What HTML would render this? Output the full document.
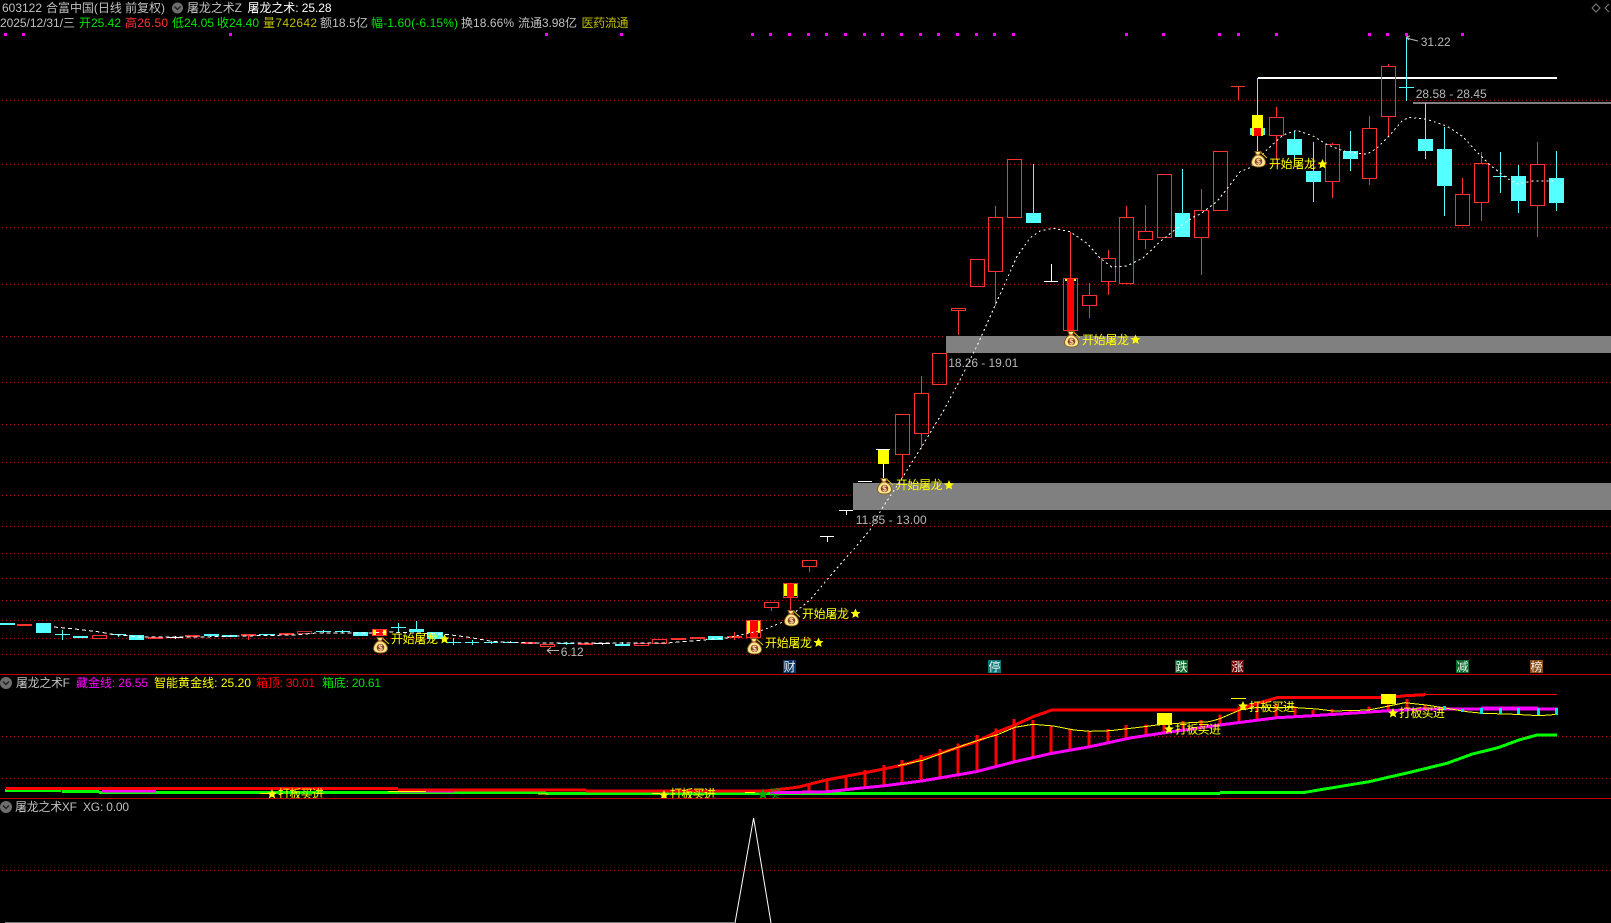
<!DOCTYPE html>
<html><head><meta charset="utf-8"><style>
html,body{margin:0;padding:0;background:#000;width:1611px;height:923px;overflow:hidden}
svg{display:block;position:absolute;left:0;top:0}
text{font-family:"Liberation Sans","WenQuanYi Zen Hei","Noto Sans CJK SC",sans-serif;font-size:12px;white-space:pre}
</style></head><body>
<svg width="1611" height="923" viewBox="0 0 1611 923" xmlns="http://www.w3.org/2000/svg">
<defs>
<g id="bag">
<path d="M9.7 1.3L16 7" stroke="#e8c800" fill="none"/>
<path d="M4 .5h6l-1.500 3.500c4 1.500 6 5 6 7.500 0 3-3 4.500-7 4.500s-7-1.500-7-4.500C.5 9 2.500 5.500 5.500 4z" fill="#ffe98a" stroke="#8a5a18" stroke-width="1"/>
<path d="M5 4h4" stroke="#a03020" stroke-width="1"/>
<circle cx="7.500" cy="10.500" r="3.800" fill="#8a3c2c"/>
<text x="7.500" y="13.500" text-anchor="middle" style="font-size:8px;font-weight:bold" fill="#ffe8a8">$</text>
</g>
<polygon id="star" points="0,-5 1.500,-1.600 5,-1.400 2.300,.9 3.100,4.500 0,2.600 -3.100,4.500 -2.300,.9 -5,-1.400 -1.500,-1.600" fill="#ffff00"/>
<clipPath id="p1"><rect x="0" y="675" width="1611" height="123"/></clipPath>
</defs>

<!-- grid -->
<g stroke="#a80000" stroke-width="1" stroke-dasharray="1 3" fill="none" shape-rendering="crispEdges">
<path d="M2 100.500H1611M2 164.500H1611M2 227.500H1611M2 284.500H1611M2 336.500H1611M2 382.500H1611M2 424.500H1611M2 462.500H1611M2 495.500H1611M2 526.500H1611M2 553.500H1611M2 578.500H1611M2 600.500H1611M2 620.500H1611M2 638.500H1611M2 654.500H1611M2 736.500H1611M2 778.500H1611M2 870.500H1611"/>
</g>

<!-- gray bands -->
<g fill="#808080" shape-rendering="crispEdges">
<rect x="946" y="336" width="665" height="17"/>
<rect x="853" y="483" width="758" height="27"/>
<rect x="1413" y="102" width="198" height="2"/>
</g>
<rect x="1258" y="77" width="299" height="2" fill="#fff" shape-rendering="crispEdges"/>

<!-- magenta markers -->
<path fill="#ff00ff" shape-rendering="crispEdges" d="M4 33h3v3h-3zM22 33h3v3h-3zM229 33h3v3h-3zM545 33h3v3h-3zM620 33h3v3h-3zM751 33h3v3h-3zM769 33h3v3h-3zM788 33h3v3h-3zM807 33h3v3h-3zM825 33h3v3h-3zM844 33h3v3h-3zM863 33h3v3h-3zM881 33h3v3h-3zM900 33h3v3h-3zM919 33h3v3h-3zM937 33h3v3h-3zM956 33h3v3h-3zM975 33h3v3h-3zM993 33h3v3h-3zM1012 33h3v3h-3zM1125 33h3v3h-3zM1162 33h3v3h-3zM1218 33h3v3h-3zM1237 33h3v3h-3zM1275 33h3v3h-3zM1368 33h3v3h-3zM1386 33h3v3h-3zM1405 33h3v3h-3zM1461 33h3v3h-3z"/>

<g shape-rendering="crispEdges">
<!-- cyan wicks -->
<path fill="none" stroke="#54ffff" d="
M1556.500 151V178M1556.500 203V211
M1518.500 165V176M1518.500 201V213
M1493 176.500H1507M1500.500 152V193
M1444.500 127V149M1444.500 186V216
M1425.500 103V139M1425.500 151V159
M1399 87.500H1414M1406.500 37V101
M1350.500 131V151M1350.500 159V171
M1313.500 142V171M1313.500 182V202
M1294.500 131V139M1294.500 155V160
M1257.500 78V115M1257.500 136V151
M1182.500 169V213
M1033.500 164V213
M630 644.500H615M622.500 642V646
M558 643.500H574M566.500 642V645
M503 642.500H518M510.500 641V643
M484 642.500H498M491.500 641V644
M465 642.500H479M472.500 640V645
M446 642.500H461M453.500 638V645
M416.500 621V629
M391 627.500H406M398.500 623V632
M335 631.500H350M342.500 630V633
M316 631.500H331M323.500 630V633
M259 634.500H275
M111 634.500H126M118.500 634V637
M55 634.500H70M62.500 630V640
"/>
<!-- special fill parts -->
<path fill="#54ffff" d="M1250 128h15v7h-15z"/>
<path fill="#ffff00" d="M1252 115h11v13h-11zM1252 128h2v8h-2zM1261 128h2v8h-2zM878 449h11v15h-11zM784 583h13v13h-13zM747 620h13v13h-13zM373 629h13v6h-13zM1065 278h11v3h-11z"/>
<path fill="#ff0000" d="M1254 128h7v8h-7zM1067 278h7v53h-7zM787 583h7v15h-7zM750 620h8v18h-8zM376 629h7v7h-7zM881 449h6v1h-6z"/>

<!-- red hollow candles -->
<path fill="none" stroke="#ff3232" stroke-width="1" d="
M1530.500 164.500h14v41h-14zM1537.500 142V164M1537.500 206V237
M1474.500 163.500h14v39h-14zM1481.500 152V163M1481.500 203V221
M1455.500 194.500h14v31h-14zM1462.500 178V194
M1381.500 66.500h14v50h-14zM1388.500 64V66M1388.500 117V136
M1362.500 128.500h14v50h-14zM1369.500 116V128M1369.500 179V185
M1325.500 144.500h14v37h-14zM1332.500 143V144M1332.500 182V198
M1269.500 117.500h14v18h-14zM1276.500 107V117M1276.500 136V160
M1231 86.500H1245M1238.500 87V100
M1213.500 151.500h14v59h-14z
M1194.500 210.500h14v27h-14zM1201.500 189V210M1201.500 238V275
M1157.500 174.500h14v63h-14z
M1138.500 231.500h14v8h-14zM1145.500 205V231M1145.500 240V249
M1119.500 217.500h14v66h-14zM1126.500 206V217
M1101.500 258.500h14v23h-14zM1108.500 250V258M1108.500 282V295
M1082.500 295.500h14v10h-14zM1089.500 283V295M1089.500 306V318
M1063.500 278.500h14v52h-14zM1070.500 232V278
M1007.500 159.500h14v58h-14z
M988.500 217.500h14v54h-14zM995.500 206V217M995.500 272V306
M970.500 259.500h14v27h-14z
M951.500 308.500h14v2h-14zM958.500 311V335
M932.500 353.500h14v31h-14z
M914.500 393.500h14v40h-14zM921.500 376V393M921.500 434V449
M895.500 414.500h14v40h-14zM902.500 455V478
M802.500 560.500h14v6h-14zM809.500 567V572
M783.500 583.500h14v14h-14zM790.500 598V610
M764.500 602.500h14v5h-14zM771.500 608V611
M746.500 620.500h14v17h-14z
M652.500 639.500h14v4h-14z
M634.500 643.500h14v2h-14z
M540.500 644.500h14v2h-14z
M372.500 629.500h14v6h-14z
M92.500 635.500h14v3h-14z
M734.500 632V640M248.500 634V640
"/>
<path fill="none" stroke="#c03030" d="M297.500 631.500h14v2h-14z"/>
<!-- red filled -->
<path fill="#ff3232" d="M727 636h15v2h-15zM690 637h15v2h-15zM671 638h15v2h-15zM578 643h15v2h-15zM521 642h15v2h-15zM279 633h15v2h-15zM241 634h15v2h-15zM185 635h15v2h-15zM148 637h15v2h-15zM17 624h15v2h-15z"/>

<!-- cyan filled -->
<path fill="#54ffff" d="M1549 178h15v25h-15zM1511 176h15v25h-15zM1437 149h15v37h-15zM1418 139h15v12h-15zM1343 151h15v8h-15zM1306 171h15v11h-15zM1287 139h15v16h-15zM1175 213h15v24h-15zM1026 213h15v10h-15zM708 636h15v4h-15zM615 644h15v2h-15zM427 632h16v7h-16zM409 629h15v3h-15zM353 632h15v4h-15zM222 635h15v2h-15zM204 634h15v2h-15zM129 635h15v5h-15zM73 636h15v2h-15zM36 623h15v10h-15zM0 623h15v2h-15z"/>

<!-- white T marks -->
<path fill="none" stroke="#fff" d="
M1044 281.500H1058M1051.500 264V281
M876 449.500H890M883.500 464V478
M858 481.500H872
M839 510.500H853M846.500 511V515
M820 536.500H834M827.500 537V542
M167 637.500H183M175.500 636V639
M594 643.500H610M602.500 643V645
"/>
</g>

<!-- MA dashed -->
<g shape-rendering="crispEdges">
<polyline fill="none" stroke="#fff" stroke-width="1" stroke-dasharray="4 3" points="54,627 75,629 100,632 110,634 140,637 173,637 200,637 240,636 293,635 317,633 367,633 390,632 443,634 467,637 490,641 500,642 533,643 600,643 667,643 727,638"/>
<polyline fill="none" stroke="#fff" stroke-width="1" stroke-dasharray="2 3" points="727,638 763,630 783,622 810,600 837,568 853,550 870,530 881.700,509 903,476.700 921.700,446.700 943,411.700 960,380 976.700,346.700 993,310 1008,276.700 1016.700,256.700 1030,238 1040,231 1053,228.300 1070,231.700 1086.700,243 1100,258 1111.700,267 1126.700,266 1143,258 1160,241.700 1176.700,228.300 1193,217.300 1200,214.300 1216.700,201.700 1230,185 1240,171.700 1250,167.700 1266.700,150 1283,135 1296.700,130.300 1313,136 1326.700,144.300 1343,151 1366.700,154.300 1376.700,148.300 1390,135 1403,120 1410,117.300 1426.700,119.300 1446.700,126 1463,136.700 1476.700,151.700 1490,165 1506.700,178.300 1518,184 1533,181 1555,181"/>
</g>

<!-- bags -->
<use href="#bag" x="373" y="637"/>
<use href="#bag" x="747" y="638"/>
<use href="#bag" x="784" y="610"/>
<use href="#bag" x="877" y="478"/>
<use href="#bag" x="1064" y="331"/>
<use href="#bag" x="1251" y="151"/>

<!-- buy labels -->
<g fill="#ffff00">
<text x="391" y="643" textLength="47">开始屠龙</text><use href="#star" x="444.500" y="639"/>
<text x="765" y="647" textLength="47">开始屠龙</text><use href="#star" x="818.500" y="642.500"/>
<text x="802" y="618" textLength="47">开始屠龙</text><use href="#star" x="855.500" y="613.500"/>
<text x="895.700" y="489" textLength="47">开始屠龙</text><use href="#star" x="949" y="485"/>
<text x="1082" y="344" textLength="47">开始屠龙</text><use href="#star" x="1135.500" y="339.500"/>
<text x="1269" y="168" textLength="47">开始屠龙</text><use href="#star" x="1322.500" y="164"/>
</g>

<!-- price labels -->
<g fill="#b8b8b8">
<text x="1420.700" y="46" textLength="30">31.22</text>
<text x="1415.700" y="98" textLength="71">28.58 - 28.45</text>
<text x="948.300" y="367" textLength="70">18.26 - 19.01</text>
<text x="855.700" y="524" textLength="71">11.85 - 13.00</text>
<text x="560.700" y="656" textLength="23">6.12</text>
</g>
<path d="M1418 41L1410 39L1406 37M1406 37l4 -1M1406 37l3 3M559 650.500H547M547 650.500l4 -3M547 650.500l4 3" fill="none" stroke="#b8b8b8"/>

<!-- separators -->
<path d="M0 674.500H1611M0 798.500H1611" stroke="#c00000" stroke-width="1" shape-rendering="crispEdges"/>

<!-- tags -->
<g shape-rendering="crispEdges">
<rect x="783" y="660" width="13" height="13" fill="#0a3a6a"/>
<rect x="988" y="660" width="13" height="13" fill="#0a7a7a"/>
<rect x="1175" y="660" width="13" height="13" fill="#0a6a2a"/>
<rect x="1231" y="660" width="13" height="13" fill="#700000"/>
<rect x="1456" y="660" width="13" height="13" fill="#0a6a2a"/>
<rect x="1530" y="660" width="13" height="13" fill="#8a4a10"/>
</g>
<g fill="#eee">
<text x="783.500" y="671">财</text>
<text x="988.500" y="671">停</text>
<text x="1175.500" y="671">跌</text>
<text x="1231.500" y="671">涨</text>
<text x="1456.500" y="671">减</text>
<text x="1530.500" y="671">榜</text>
</g>

<!-- sub panel 1 -->
<g clip-path="url(#p1)" shape-rendering="crispEdges">
<path fill="none" stroke="#ff0000" stroke-width="3" d="M809 783.300V791.700M827 779V790M846 775V789M865 770V787.700M884 765V785.700M902 760V783.300M921 755V781.700M940 749V779.300M958 743.300V776.700M977 735V772.300M996 728.300V766.700M1014 719V762.300M1033 720V756.700M1051 726.300V753.300M1070 728.300V750M1089 731V746.700M1108 729V743.300M1126 725V740M1146 724.300V736.700M1164 721.700V733.300M1183 721V730M1201 720V726.700M1220 714.300V723.300M1239 706.700V721M1257 705V719M1276 703.300V717.700M1295 706.700V715.700M1313 710V715M1332 709V714.300M1350 710V713.300M1369 706.700V712.300M1388 704.300V711M1407 699V710M1425 704.300V709"/>
<path fill="none" stroke="#00ff00" stroke-width="3" d="M5 790.700H61M62 791.700H99M99 792.700H546M546 793.700H1220M1220 792.700H1303L1317 790.300L1369 781.700L1410 772.300L1447 763.300L1472.500 754L1498 747.700L1519 740L1537 735H1557"/>
<path fill="none" stroke="#ff00ff" stroke-width="3" d="M102 791H156M398 791H454M770 792.300H800L828 791.700L852 789L885 785.700L921.600 781L976 771.700L1015 761.700L1052 753.300L1090 746.700L1130 738L1163 733L1220 725L1277 717.700L1313 715.700L1350 713.300L1385 711L1421 709H1558"/>
<path fill="none" stroke="#ff00ff" stroke-width="2" d="M1481 707.700H1538"/>
<path fill="none" stroke="#ff0000" stroke-width="3" d="M6 788.700H398M398 790H586M586 791H765L790 788.200L800 786.700L826 780L867 772.300L903 765L940 753.300L976 741.700L994 733.300L1015 725L1033 716.700L1052 710H1237L1255 704L1277 697.700H1380L1396 696.700L1406 695.700L1425 694.700"/>
<path fill="none" stroke="#ff0000" stroke-width="1" d="M1425 694.500H1557"/>
<path fill="none" stroke="#ffff00" stroke-width="1" d="M388 791.700H426M538 794H548M745 792.500H755M898 765.700L924 760L955 748.300L976 741L996.600 735L1015 727.300L1033 724.300L1053.500 726L1074 730L1090 731.300L1110 730.700L1136 727.700L1157 725L1178 723.300L1209 721.700L1219 719L1240 710L1255 707.700L1297 707.700L1317 709L1333 711L1369 710L1390 705.700L1405 702.700L1426 705L1447 708.300L1467 711.700L1483 713.300L1514 714.300L1540 715.700L1558 714.300"/>
<path fill="#00e0e0" d="M1443 706h3v4h-3zM1461 709h3v3h-3zM1480 708h3v6h-3zM1499 708h3v6h-3zM1517 708h3v6h-3zM1537 708h3v7h-3zM1555 708h3v7h-3z"/>
<path fill="#ffff00" d="M1157 713h15v12h-15zM1381 694h15v10h-15z"/>
<path stroke="#ffff00" fill="none" d="M260 793.500H268M652 793.500H660M1231 698.500H1246"/>
</g>
<g clip-path="url(#p1)" fill="#ffff00">
<use href="#star" x="272" y="794"/><text x="278" y="798" textLength="46">打板买进</text>
<use href="#star" x="664" y="795"/><text x="670" y="798" textLength="46">打板买进</text>
<use href="#star" x="1169" y="729"/><text x="1175" y="733.500" textLength="46">打板买进</text>
<use href="#star" x="1243" y="706"/><text x="1249" y="711" textLength="46">打板买进</text>
<use href="#star" x="1393" y="713"/><text x="1399" y="717" textLength="46">打板买进</text>
<text x="757" y="798" fill="#00b000">★买</text>
</g>

<!-- sub panel 2 -->
<polyline points="735,923 753.600,818 771,923" fill="none" stroke="#fff" stroke-width="1"/>
<path d="M5 922.500H735" stroke="#777" shape-rendering="crispEdges"/>

<!-- circle icons -->
<g>
<circle cx="177.500" cy="8" r="5.500" fill="#6e6e6e"/><path d="M174.500 6.500l3 3 3-3" fill="none" stroke="#222" stroke-width="1.500"/>
<circle cx="6" cy="683" r="6" fill="#6e6e6e"/><path d="M3 681.500l3 3 3-3" fill="none" stroke="#222" stroke-width="1.500"/>
<circle cx="6" cy="807" r="6" fill="#6e6e6e"/><path d="M3 805.500l3 3 3-3" fill="none" stroke="#222" stroke-width="1.500"/>
</g>
<path d="M1596 4l4 4-4 4-4-4zM1609 4l-4 4 4 4" fill="none" stroke="#808080"/>

<!-- header row 1 -->
<text x="2" y="12" fill="#c0c0c0" textLength="40">603122</text>
<text x="46" y="12" fill="#c0c0c0" textLength="119">合富中国(日线 前复权)</text>
<text x="187" y="12" fill="#c0c0c0" textLength="55">屠龙之术Z</text>
<text x="247.500" y="12" fill="#fff" textLength="84">屠龙之术: 25.28</text>

<!-- header row 2 -->
<text x="0" y="27" fill="#c0c0c0" textLength="75">2025/12/31/三</text>
<text x="79" y="27" fill="#00e600" textLength="42">开25.42</text>
<text x="125" y="27" fill="#ff3232" textLength="43">高26.50</text>
<text x="172" y="27" fill="#00e600" textLength="42">低24.05</text>
<text x="217" y="27" fill="#00e600" textLength="42">收24.40</text>
<text x="263" y="27" fill="#c0c000" textLength="54">量742642</text>
<text x="320" y="27" fill="#c0c0c0" textLength="48">额18.5亿</text>
<text x="371" y="27" fill="#00e600" textLength="87">幅-1.60(-6.15%)</text>
<text x="461" y="27" fill="#c0c0c0" textLength="53">换18.66%</text>
<text x="518" y="27" fill="#c0c0c0" textLength="59">流通3.98亿</text>
<text x="581.500" y="27" fill="#c0c000" textLength="47">医药流通</text>

<!-- sub1 title -->
<text x="16" y="687" fill="#c0c0c0" textLength="54">屠龙之术F</text>
<text x="76" y="687" fill="#ff00ff" textLength="72">藏金线: 26.55</text>
<text x="154" y="687" fill="#ffff00" textLength="97">智能黄金线: 25.20</text>
<text x="256" y="687" fill="#ff0000" textLength="59">箱顶: 30.01</text>
<text x="322" y="687" fill="#00e600" textLength="59">箱底: 20.61</text>

<!-- sub2 title -->
<text x="15" y="811" fill="#c0c0c0" textLength="62">屠龙之术XF</text>
<text x="83" y="811" fill="#c0c0c0" textLength="46">XG: 0.00</text>
</svg>
</body></html>
